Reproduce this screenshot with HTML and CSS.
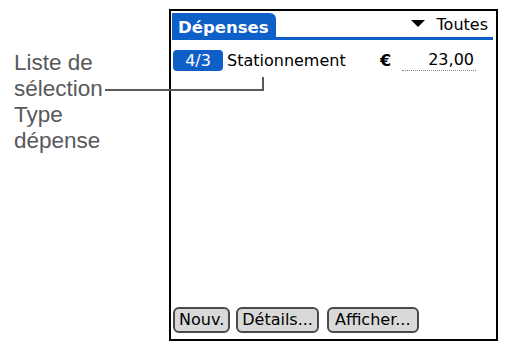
FILE: index.html
```html
<!DOCTYPE html>
<html lang="fr">
<head>
  <meta charset="UTF-8">
  <meta name="viewport" content="width=device-width, initial-scale=1.0">
  <title>Dépenses</title>
  <link rel="stylesheet" href="styles.css">
</head>
<body>

<div class="page">
    <!-- Légende à gauche -->
    <div class="caption">Liste de<br>sélection<br>Type<br>dépense</div>

    <!-- Écran de l'organiseur -->
    <div class="device">
        <div class="titlebar">
            <span class="tab">Dépenses</span>
            <span class="filter"><span class="arrow"></span>Toutes</span>
        </div>

        <div class="row">
            <span class="date">4/3</span>
            <span class="type">Stationnement</span>
            <span class="currency">€</span>
            <span class="amount">23,00</span>
        </div>

        <div class="buttons">
            <button class="button">Nouv.</button>
            <button class="button">Détails...</button>
            <button class="button wide">Afficher...</button>
        </div>
    </div>

    <!-- Trait de rappel -->
    <div class="callout"></div>
</div>

</body>
</html>
```

FILE: styles.css
```css
body {
  margin: 0;
  background-color: #fff;
  font-family: 'DejaVu Sans', sans-serif;
}

.page {
  position: relative;
  display: flex;
  align-items: flex-start;
}

.caption {
  width: 155px;
  padding: 50px 0 0 14px;
  font-family: 'Liberation Sans', Arial, sans-serif;
  font-size: 22.5px;
  line-height: 26px;
  color: #58595b;
}

.device {
  margin-top: 9px;
  width: 325px;
  height: 328px;
  border: 2px solid #000;
  display: flex;
  flex-direction: column;
}

.titlebar {
  display: flex;
  margin: 2px 3px 0 1px;
  height: 24px;
  border-bottom: 3px solid #0f5fc8;
}

.tab {
  width: 98px;
  padding: 6px 0 0 6px;
  line-height: 18px;
  font-size: 16.5px;
  font-weight: bold;
  color: #fff;
  background-color: #0f5fc8;
  border-radius: 0 6px 0 0;
}

.filter {
  margin-left: auto;
  padding: 3px 5px 0 0;
  line-height: 18px;
  font-size: 16px;
  color: #000;
}

.arrow {
  display: inline-block;
  vertical-align: 3px;
  margin-right: 12px;
  border-left: 7px solid transparent;
  border-right: 7px solid transparent;
  border-top: 7px solid #000;
}

.row {
  display: flex;
  margin: 10px 0 0 2px;
  height: 21px;
  font-size: 16px;
  line-height: 21px;
}

.date {
  width: 50px;
  text-align: center;
  color: #fff;
  background-color: #0f5fc8;
  border-radius: 4px;
}

.type {
  width: 153px;
  margin-left: 4px;
}

.currency {
  width: 22px;
  font-weight: bold;
}

.amount {
  width: 72px;
  height: 20px;
  line-height: 20px;
  padding-right: 2px;
  text-align: right;
  border-bottom: 1px dotted #888;
}

.buttons {
  display: flex;
  gap: 6px;
  margin: auto 0 6px 2px;
}

.button {
  height: 26px;
  padding: 0 4px;
  font-family: 'DejaVu Sans', sans-serif;
  font-size: 16px;
  line-height: 22px;
  color: #000;
  background-color: #d9d9d9;
  border: 2px solid #4a4a4a;
  border-radius: 6px;
}

.button.wide {
  margin-left: 2px;
  padding: 0 6px;
}

.callout {
  position: absolute;
  left: 105px;
  top: 77px;
  width: 157px;
  height: 12px;
  border-right: 2px solid #5a5a5a;
  border-bottom: 2px solid #5a5a5a;
}
```
